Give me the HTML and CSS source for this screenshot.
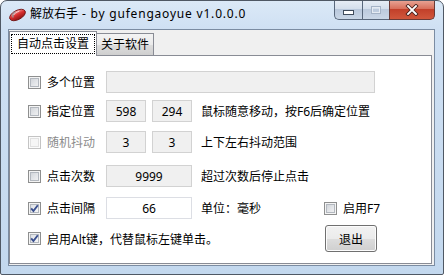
FILE: index.html
```html
<!DOCTYPE html>
<html lang="zh-CN">
<head>
<meta charset="utf-8">
<title>解放右手</title>
<link rel="stylesheet" href="styles.css">
</head>
<body>
<div class="window">
  <div class="titlebar">
    <svg class="appicon" width="19" height="14" viewBox="0 0 19 14">
      <defs>
        <linearGradient id="mg" x1="0" y1="0" x2="0" y2="1">
          <stop offset="0" stop-color="#f4a0a0"/>
          <stop offset="0.45" stop-color="#d93030"/>
          <stop offset="1" stop-color="#8e1414"/>
        </linearGradient>
      </defs>
      <g transform="rotate(-28 9.5 7)">
        <ellipse cx="9.5" cy="7" rx="8.6" ry="4.6" fill="url(#mg)" stroke="#6e1010" stroke-width="0.8"/>
        <path d="M4.5 7.2 Q4.8 3.6 9 3.2" fill="none" stroke="#9a9a9a" stroke-width="1.3"/>
        <path d="M6 5.2 Q9 3.4 13 4.4" fill="none" stroke="#ffd6d6" stroke-width="0.8"/>
      </g>
    </svg>
    <span class="title">解放右手<span class="latin"> - by gufengaoyue v1.0.0.0</span></span>
    <div class="caption">
      <div class="cbtn min"><span class="minbar"></span></div>
      <div class="cbtn max"><span class="maxbox"></span></div>
      <div class="cbtn close">
        <svg width="14" height="12" viewBox="0 0 14 12">
          <path d="M3 2 L11 10 M11 2 L3 10" stroke="#4a2420" stroke-width="3.6" stroke-linecap="square"/>
          <path d="M3 2 L11 10 M11 2 L3 10" stroke="#ffffff" stroke-width="1.8" stroke-linecap="square"/>
        </svg>
      </div>
    </div>
  </div>
  <div class="client">
    <div class="tabs">
      <div class="tab active"><span class="focus">自动点击设置</span></div>
      <div class="tab">关于软件</div>
    </div>
    <div class="panel">
      <div class="row r1">
        <span class="cb"></span><span class="lbl">多个位置</span>
        <span class="box dis wide"></span>
      </div>
      <div class="row r2">
        <span class="cb"></span><span class="lbl">指定位置</span>
        <span class="box dis small">598</span>
        <span class="box dis small second">294</span>
        <span class="note">鼠标随意移动，按F6后确定位置</span>
      </div>
      <div class="row r3">
        <span class="cb off"></span><span class="lbl grey">随机抖动</span>
        <span class="box dis small">3</span>
        <span class="box dis small second">3</span>
        <span class="note">上下左右抖动范围</span>
      </div>
      <div class="row r4">
        <span class="cb"></span><span class="lbl">点击次数</span>
        <span class="box dis mid">9999</span>
        <span class="note">超过次数后停止点击</span>
      </div>
      <div class="row r5">
        <span class="cb on"><svg width="11" height="11" viewBox="0 0 11 11"><path d="M2.2 5.4 L4.4 8 L8.8 2.2" fill="none" stroke="#3a4f8e" stroke-width="1.9"/></svg></span><span class="lbl">点击间隔</span>
        <span class="box mid">66</span>
        <span class="note">单位：毫秒</span>
        <span class="side"><span class="cb"></span><span>启用F7</span></span>
      </div>
      <div class="row r6">
        <span class="cb on"><svg width="11" height="11" viewBox="0 0 11 11"><path d="M2.2 5.4 L4.4 8 L8.8 2.2" fill="none" stroke="#3a4f8e" stroke-width="1.9"/></svg></span><span>启用Alt键，代替鼠标左键单击。</span>
        <span class="side"><span class="btn">退出</span></span>
      </div>
    </div>
  </div>
</div>
</body>
</html>
```

FILE: styles.css
```css
html, body {
  margin: 0;
  padding: 0;
  background: #ffffff;
}

body {
  font-family: "Noto Sans", "Noto Sans CJK SC", sans-serif;
  font-size: 12px;
  color: #000;
}

.window {
  width: 444px;
  height: 275px;
  box-sizing: border-box;
  border: 1px solid #4f5864;
  border-radius: 7px 7px 2px 2px;
  background: linear-gradient(to bottom, #dbe9f7 0px, #cfe0f3 28px, #c3d8ee 100%);
  display: flex;
  flex-direction: column;
  overflow: hidden;
}

.titlebar {
  height: 28px;
  display: flex;
  align-items: flex-start;
  flex: none;
}

.appicon {
  margin: 7px 0 0 7px;
  flex: none;
}

.title {
  margin: 5px 0 0 3px;
  line-height: 16px;
  font-size: 12px;
  white-space: nowrap;
  color: #000;
}

.latin {
  letter-spacing: 0.8px;
}

.caption {
  margin-left: auto;
  margin-right: 8px;
  margin-top: -1px;
  display: flex;
  height: 20px;
}

.cbtn {
  box-sizing: border-box;
  height: 20px;
  border: 1px solid #58677b;
  border-top: none;
  display: flex;
  align-items: center;
  justify-content: center;
}

.min {
  width: 28px;
  border-radius: 0 0 0 5px;
  border-right: none;
  background: linear-gradient(to bottom, #e8eef6 0%, #d5dfec 45%, #b9c8dc 50%, #c9d6e6 100%);
}

.max {
  width: 27px;
  border-right: none;
  background: linear-gradient(to bottom, #e8eef6 0%, #d5dfec 45%, #bccadd 50%, #cad7e7 100%);
}

.close {
  width: 46px;
  border-radius: 0 0 5px 0;
  background: linear-gradient(to bottom, #e9a899 0%, #d8705c 45%, #c2402a 50%, #d0573c 100%);
  border-color: #6a3a36;
}

.minbar {
  width: 9px;
  height: 3px;
  margin-top: 5px;
  background: #fff;
  border: 1px solid #404c5c;
}

.maxbox {
  width: 8px;
  height: 6px;
  border: 1px solid #a5b3c6;
  box-shadow: inset 0 0 0 1px #e5ebf3;
}

.client {
  flex: 1;
  margin: 0 8px 8px 7px;
  border: 1px solid #7b8ca2;
  background: #f0f0f0;
  display: flex;
  flex-direction: column;
  padding: 1px 1px 1px 0;
}

.tabs {
  display: flex;
  align-items: flex-end;
  height: 24px;
  flex: none;
}

.tab {
  box-sizing: border-box;
  height: 22px;
  border: 1px solid #898c95;
  border-bottom: none;
  border-left: none;
  padding: 3px 4px 0 4px;
  line-height: 16px;
  background: linear-gradient(to bottom, #f3f3f3 0%, #ebebeb 50%, #dddddd 51%, #cfcfcf 100%);
  white-space: nowrap;
}

.tab.active {
  position: relative;
  z-index: 1;
  height: 25px;
  margin-bottom: -1px;
  width: 88px;
  border-left: 1px solid #898c95;
  background: #ffffff;
  padding: 2px 0 0 1px;
}

.focus {
  display: inline-block;
  border: 1px dotted #000;
  padding: 1px 5px 1px 5px;
  line-height: 16px;
}

.panel {
  flex: 1;
  background: #ffffff;
  border: 1px solid #898c95;
  margin-right: 1px;
  padding: 15px 0 0 18px;
  display: flex;
  flex-direction: column;
}

.row {
  display: flex;
  align-items: center;
  height: 22px;
  white-space: nowrap;
}

.r2 { margin-top: 7px; }
.r3 { margin-top: 9px; }
.r4 { margin-top: 12px; }
.r5 { margin-top: 10px; }
.r6 { margin-top: 6px; height: 27px; }

.cb {
  box-sizing: border-box;
  width: 13px;
  height: 13px;
  flex: none;
  margin-right: 6px;
  border: 1px solid #8e8f8f;
  background: linear-gradient(135deg, #c9cdd3 0%, #e4e6e9 55%, #f6f6f6 100%);
  box-shadow: inset 0 0 0 1px #f4f4f4, inset 0 0 0 2px #b3b8bf;
  display: flex;
  align-items: center;
  justify-content: center;
}

.cb.on {
  background: linear-gradient(135deg, #d6d9de 0%, #eceef0 55%, #fafafa 100%);
}

.cb.off {
  border-color: #c4c4c4;
  background: #f6f6f6;
  box-shadow: inset 0 0 0 1px #fbfbfb, inset 0 0 0 2px #e1e1e1;
}

.lbl {
  width: 59px;
  flex: none;
}

.grey {
  color: #8b8b8b;
}

.box {
  box-sizing: border-box;
  height: 22px;
  border: 1px solid #dcdee4;
  background: #ffffff;
  display: flex;
  align-items: center;
  justify-content: center;
  flex: none;
}

.box.dis {
  background: #f0f0f0;
  border-color: #d2d2d2;
}

.wide { width: 269px; }
.small { width: 40px; }
.second { margin-left: 6px; }
.mid { width: 86px; }

.note {
  margin-left: 9px;
}

.side {
  margin-left: auto;
  margin-right: 48px;
  width: 59px;
  display: flex;
  align-items: center;
}

.btn {
  box-sizing: border-box;
  width: 52px;
  height: 27px;
  margin-left: 1px;
  border: 1px solid #707070;
  border-radius: 3px;
  background: linear-gradient(to bottom, #f2f2f2 0%, #ebebeb 50%, #dddddd 51%, #cfcfcf 100%);
  box-shadow: inset 0 0 0 1px #fcfcfc;
  display: flex;
  align-items: center;
  justify-content: center;
}
```
